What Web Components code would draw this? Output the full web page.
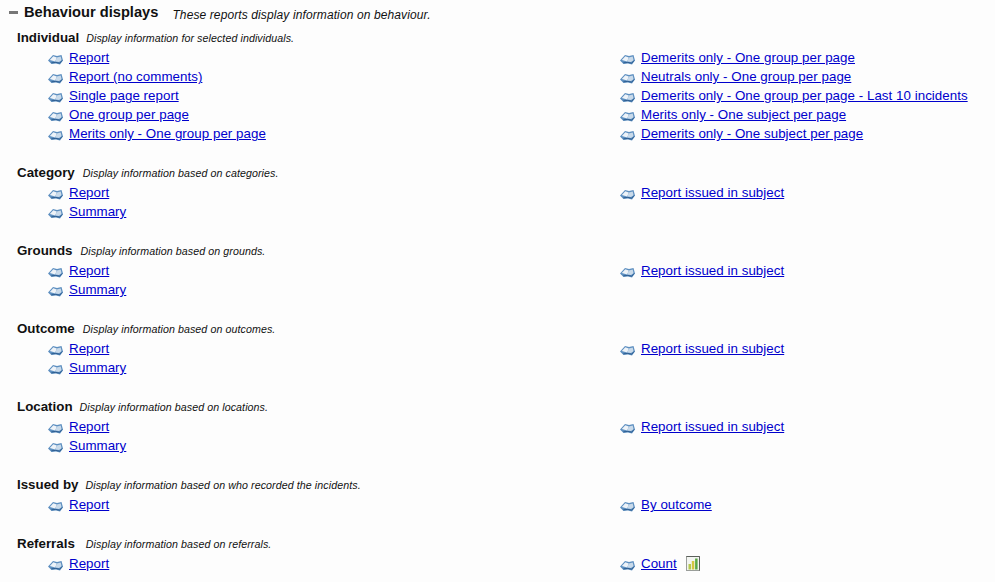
<!DOCTYPE html>
<html>
<head>
<meta charset="utf-8">
<title>Behaviour displays</title>
<style>
  html, body { margin: 0; background: #fdfdfd; }
  body { font-family: "Liberation Sans", Arial, sans-serif; color: #111; }
</style>
</head>
<body>
<report-panel title="Behaviour displays" desc="These reports display information on behaviour.">
  <report-group title="Individual" desc="Display information for selected individuals.">
    <report-link>Report</report-link>
    <report-link slot="right">Demerits only - One group per page</report-link>
    <report-link>Report (no comments)</report-link>
    <report-link slot="right">Neutrals only - One group per page</report-link>
    <report-link>Single page report</report-link>
    <report-link slot="right">Demerits only - One group per page - Last 10 incidents</report-link>
    <report-link>One group per page</report-link>
    <report-link slot="right">Merits only - One subject per page</report-link>
    <report-link>Merits only - One group per page</report-link>
    <report-link slot="right">Demerits only - One subject per page</report-link>
  </report-group>
  <report-group title="Category" desc="Display information based on categories." style="--desc-gap: 8px">
    <report-link>Report</report-link>
    <report-link>Summary</report-link>
    <report-link slot="right">Report issued in subject</report-link>
  </report-group>
  <report-group title="Grounds" desc="Display information based on grounds." style="--desc-gap: 8px">
    <report-link>Report</report-link>
    <report-link>Summary</report-link>
    <report-link slot="right">Report issued in subject</report-link>
  </report-group>
  <report-group title="Outcome" desc="Display information based on outcomes." style="--desc-gap: 8px">
    <report-link>Report</report-link>
    <report-link>Summary</report-link>
    <report-link slot="right">Report issued in subject</report-link>
  </report-group>
  <report-group title="Location" desc="Display information based on locations.">
    <report-link>Report</report-link>
    <report-link>Summary</report-link>
    <report-link slot="right">Report issued in subject</report-link>
  </report-group>
  <report-group title="Issued by" desc="Display information based on who recorded the incidents.">
    <report-link>Report</report-link>
    <report-link slot="right">By outcome</report-link>
  </report-group>
  <report-group title="Referrals" desc="Display information based on referrals." style="--desc-gap: 11px">
    <report-link>Report</report-link>
    <report-link slot="right" chart>Count</report-link>
  </report-group>
</report-panel>

<script>
(() => {
  const panelTemplate = document.createElement('template');
  panelTemplate.innerHTML = `
    <style>
      :host { display: block; padding: 4px 0 0 9px; }
      .head { display: flex; align-items: flex-start; height: 24px; }
      .minus { width: 9px; height: 3px; background: #777; margin: 7px 6px 0 0; }
      .title { font-size: 14.67px; font-weight: bold; }
      .desc { font-size: 12px; font-style: italic; letter-spacing: 0.11px; margin: 4px 0 0 14px; }
      .body { padding-left: 8px; }
    </style>
    <div class="head">
      <span class="minus"></span>
      <span class="title"></span>
      <span class="desc"></span>
    </div>
    <div class="body"><slot></slot></div>
  `;

  class ReportPanel extends HTMLElement {
    constructor() {
      super();
      this.attachShadow({ mode: 'open' });
      this.shadowRoot.appendChild(panelTemplate.content.cloneNode(true));
    }

    connectedCallback() {
      this.shadowRoot.querySelector('.title').textContent = this.getAttribute('title');
      this.shadowRoot.querySelector('.desc').textContent = this.getAttribute('desc');
      this.removeAttribute('title');
    }
  }

  const groupTemplate = document.createElement('template');
  groupTemplate.innerHTML = `
    <style>
      :host { display: block; margin-bottom: 20px; }
      .head { display: flex; align-items: baseline; box-sizing: border-box; height: 20px; padding-top: 2px; }
      .title { font-size: 13.33px; font-weight: bold; }
      .desc { font-size: 10.67px; font-style: italic; letter-spacing: 0.08px; margin-left: var(--desc-gap, 7px); }
      .columns { display: grid; grid-template-columns: 572px 1fr; padding-left: 31px; }
      .column { display: flex; flex-direction: column; }
    </style>
    <div class="head">
      <span class="title"></span>
      <span class="desc"></span>
    </div>
    <div class="columns">
      <div class="column"><slot></slot></div>
      <div class="column"><slot name="right"></slot></div>
    </div>
  `;

  class ReportGroup extends HTMLElement {
    constructor() {
      super();
      this.attachShadow({ mode: 'open' });
      this.shadowRoot.appendChild(groupTemplate.content.cloneNode(true));
    }

    connectedCallback() {
      this.shadowRoot.querySelector('.title').textContent = this.getAttribute('title');
      this.shadowRoot.querySelector('.desc').textContent = this.getAttribute('desc');
      this.removeAttribute('title');
    }
  }

  const linkTemplate = document.createElement('template');
  linkTemplate.innerHTML = `
    <style>
      :host { display: flex; align-items: center; height: 19px; font-size: 13.33px; letter-spacing: 0.04px; }
      .book { width: 15px; height: 11px; margin: 4px 6px 0 0; flex: none; }
      a { color: #0000cc; text-decoration: underline; }
      .chart { width: 14px; height: 15px; margin: 0 0 1px 9px; flex: none; }
    </style>
    <svg class="book" viewBox="0 0 15 11">
      <path d="M0 6.5 L5 1 L9 2 L13.5 1 L15 6.5 L12 10.5 L8 9.5 L3.5 10 Z" fill="#5d8fc0"/>
      <path d="M1.8 6 L5.3 2.2 L8.8 3.4 L7.2 7.6 Z" fill="#eef3f8"/>
      <path d="M8.8 3.4 L12.7 2.4 L13.6 6.2 L11 8 L7.2 7.6 Z" fill="#c9daea"/>
      <path d="M3.4 8.8 L7.8 8.4 L11.8 9.2 L14.2 6.4" stroke="#2f5f92" stroke-width="1" fill="none"/>
    </svg>
    <a href="#"><slot></slot></a>
  `;

  const chartMarkup = `
    <svg class="chart" viewBox="0 0 14 15">
      <rect x="0.5" y="0.5" width="13" height="14" fill="#f3f5f1" stroke="#9a9e9a"/>
      <path d="M0.5 0.5 H13.5 V14.5" fill="none" stroke="#5b605b"/>
      <rect x="2.5" y="8" width="2.5" height="5.5" fill="#b5c94c"/>
      <rect x="5.8" y="5" width="2.5" height="8.5" fill="#d3c640"/>
      <rect x="9.1" y="2.5" width="2.5" height="11" fill="#5aa845"/>
    </svg>
  `;

  class ReportLink extends HTMLElement {
    constructor() {
      super();
      this.attachShadow({ mode: 'open' });
      this.shadowRoot.appendChild(linkTemplate.content.cloneNode(true));
    }

    connectedCallback() {
      if (this.hasAttribute('chart')) {
        this.shadowRoot.querySelector('a').insertAdjacentHTML('afterend', chartMarkup);
      }
    }
  }

  customElements.define('report-panel', ReportPanel);
  customElements.define('report-group', ReportGroup);
  customElements.define('report-link', ReportLink);
})();
</script>
</body>
</html>
